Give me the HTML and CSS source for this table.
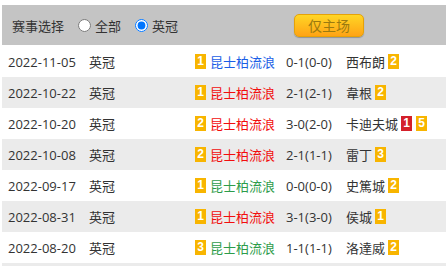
FILE: index.html
```html
<!DOCTYPE html>
<html lang="zh">
<head>
<meta charset="utf-8">
<link rel="stylesheet" href="styles.css">
</head>
<body>
<div class="wrap">
  <div class="head">
    <span class="label">赛事选择</span>
    <label class="opt"><input type="radio" name="lg"><span>全部</span></label>
    <label class="opt"><input type="radio" name="lg" checked><span>英冠</span></label>
    <button class="btn">仅主场</button>
  </div>
  <div class="list">
    <div class="row"><span class="date">2022-11-05</span><span class="lg">英冠</span><span class="home"><i class="b">1</i><span class="blue">昆士柏流浪</span></span><span class="sc">0-1(0-0)</span><span class="away">西布朗<i class="b">2</i></span></div>
    <div class="row alt"><span class="date">2022-10-22</span><span class="lg">英冠</span><span class="home"><i class="b">1</i><span class="red">昆士柏流浪</span></span><span class="sc">2-1(2-1)</span><span class="away">韋根<i class="b">2</i></span></div>
    <div class="row"><span class="date">2022-10-20</span><span class="lg">英冠</span><span class="home"><i class="b">2</i><span class="red">昆士柏流浪</span></span><span class="sc">3-0(2-0)</span><span class="away">卡迪夫城<i class="b r">1</i><i class="b">5</i></span></div>
    <div class="row alt"><span class="date">2022-10-08</span><span class="lg">英冠</span><span class="home"><i class="b">2</i><span class="red">昆士柏流浪</span></span><span class="sc">2-1(1-1)</span><span class="away">雷丁<i class="b">3</i></span></div>
    <div class="row"><span class="date">2022-09-17</span><span class="lg">英冠</span><span class="home"><i class="b">1</i><span class="green">昆士柏流浪</span></span><span class="sc">0-0(0-0)</span><span class="away">史篤城<i class="b">2</i></span></div>
    <div class="row alt"><span class="date">2022-08-31</span><span class="lg">英冠</span><span class="home"><i class="b">1</i><span class="red">昆士柏流浪</span></span><span class="sc">3-1(3-0)</span><span class="away">侯城<i class="b">1</i></span></div>
    <div class="row"><span class="date">2022-08-20</span><span class="lg">英冠</span><span class="home"><i class="b">3</i><span class="green">昆士柏流浪</span></span><span class="sc">1-1(1-1)</span><span class="away">洛達威<i class="b">2</i></span></div>
    <div class="row alt last"></div>
  </div>
</div>
</body>
</html>
```
FILE: styles.css
```css
html, body { margin: 0; padding: 0; background: #fff; }
body {
  font-family: "Open Sans", "Noto Sans CJK SC", sans-serif;
  font-size: 13px;
  color: #333;
}
.wrap { margin: 5px 0 0 2px; }
.head {
  height: 40px;
  background: #c4c4c4;
  display: flex;
  align-items: center;
  padding-left: 10px;
  margin-bottom: 1px;
}
.label { margin-right: 9px; }
.opt { display: flex; align-items: center; margin-right: 9px; }
.opt input { margin: 0 4px 0 5px; width: 13px; height: 13px; }
.btn {
  margin-left: 107px;
  width: 70px;
  height: 23px;
  border: 1px solid #e5a208;
  border-radius: 5px;
  background: linear-gradient(#ffd625, #ffa315);
  box-shadow: 0 1px 1px rgba(0,0,0,0.25);
  color: #9b7a10;
  font-family: "Noto Sans CJK SC", sans-serif;
  font-size: 14px;
  padding: 0;
  line-height: 20px;
}
.row {
  height: 31px;
  display: grid;
  grid-template-columns: 81px 106px 91px 60px 1fr;
  align-items: center;
  padding-left: 6px;
}
.row.last { height: 4px; }
.alt { background: #ebebeb; }
.home, .away { display: flex; align-items: center; }
.b {
  font-style: normal;
  display: inline-block;
  width: 11px;
  height: 15px;
  line-height: 15px;
  text-align: center;
  background: #f8b500;
  color: #fff;
  font-size: 12px;
  font-weight: bold;
  font-family: "Liberation Sans", sans-serif;
  margin-right: 4px;
}
.away .b { margin: 0 0 0 3px; }
.away .b + .b { margin-left: 4px; }
.b.r { background: #d4202a; }
.blue { color: #1a5ee6; }
.red { color: #f20d0d; }
.green { color: #2d9c4a; }
```
